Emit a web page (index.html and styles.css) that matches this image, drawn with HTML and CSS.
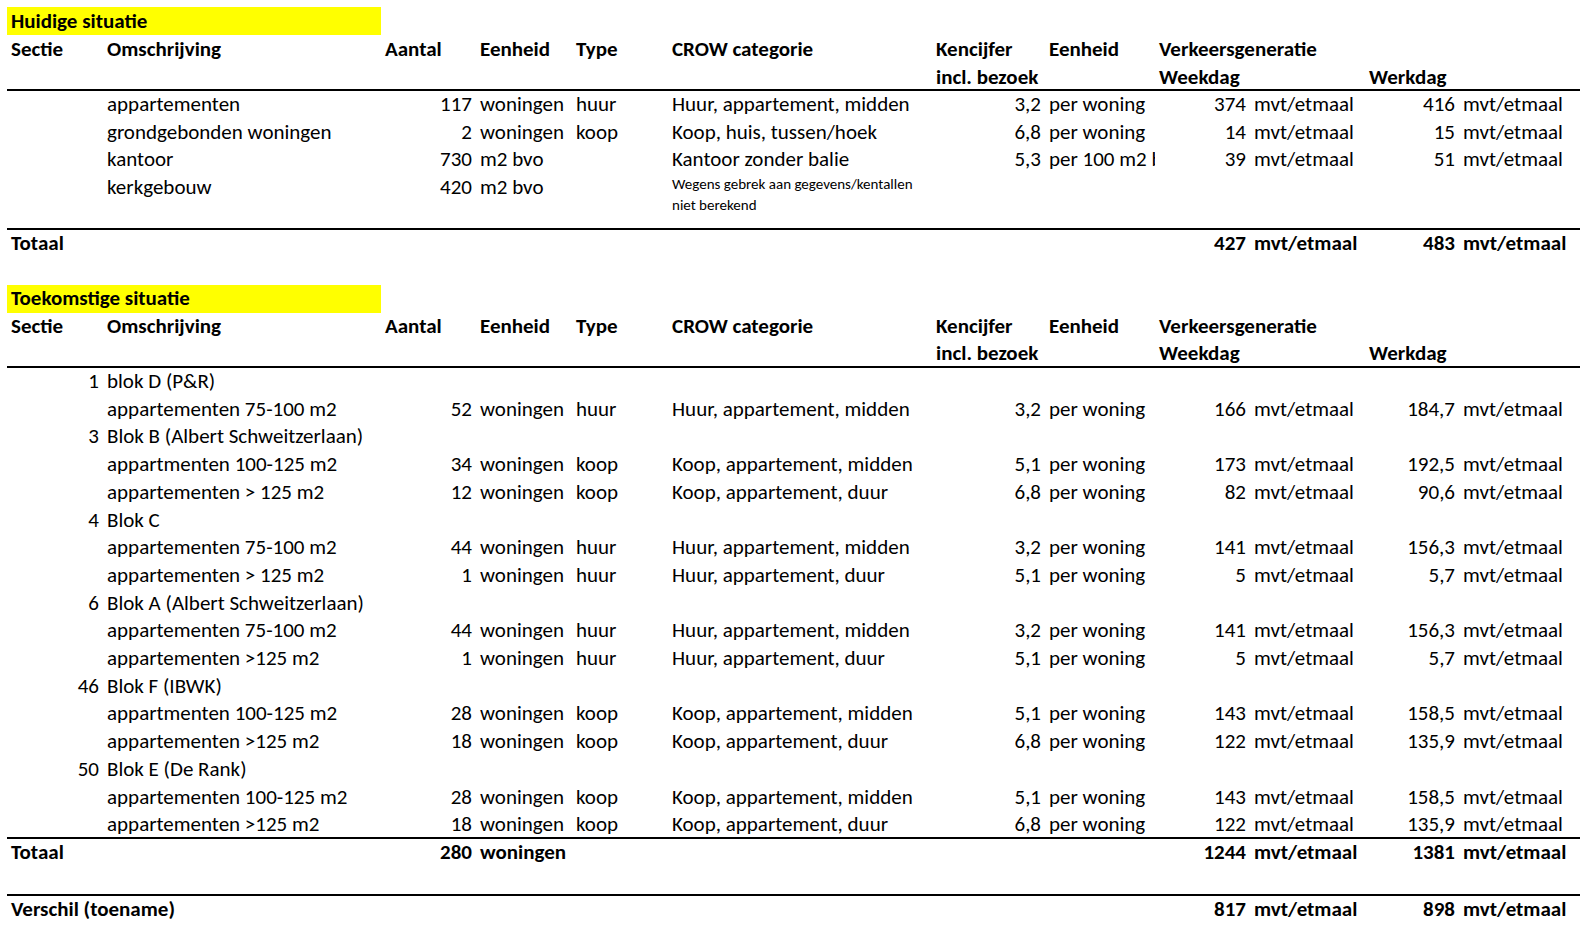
FILE: index.html
```html
<!DOCTYPE html>
<html lang="nl">
<head>
<meta charset="utf-8">
<title>Verkeersgeneratie</title>
<link rel="stylesheet" href="styles.css">
</head>
<body>
<table class="sheet first">
  <colgroup>
    <col class="c-sectie"><col class="c-omschr"><col class="c-aantal"><col class="c-eenheid"><col class="c-type"><col class="c-crow"><col class="c-ken"><col class="c-eenh2"><col class="c-wnum"><col class="c-wunit"><col class="c-knum"><col class="c-kunit">
  </colgroup>
  <tr class="head"><td colspan="2" class="hl b">Huidige situatie</td><td colspan="10"></td></tr>
  <tr class="head b"><td>Sectie</td><td>Omschrijving</td><td>Aantal</td><td>Eenheid</td><td>Type</td><td>CROW categorie</td><td>Kencijfer</td><td>Eenheid</td><td>Verkeersgeneratie</td><td></td><td></td><td></td></tr>
  <tr class="head b rule"><td></td><td></td><td></td><td></td><td></td><td></td><td>incl. bezoek</td><td></td><td>Weekdag</td><td></td><td>Werkdag</td><td></td></tr>
  <tr><td></td><td>appartementen</td><td class="num">117</td><td>woningen</td><td>huur</td><td>Huur, appartement, midden</td><td class="num">3,2</td><td>per woning</td><td class="num">374</td><td>mvt/etmaal</td><td class="num">416</td><td>mvt/etmaal</td></tr>
  <tr><td></td><td>grondgebonden woningen</td><td class="num">2</td><td>woningen</td><td>koop</td><td>Koop, huis, tussen/hoek</td><td class="num">6,8</td><td>per woning</td><td class="num">14</td><td>mvt/etmaal</td><td class="num">15</td><td>mvt/etmaal</td></tr>
  <tr><td></td><td>kantoor</td><td class="num">730</td><td>m2 bvo</td><td></td><td>Kantoor zonder balie</td><td class="num">5,3</td><td class="clip">per 100 m2 bvo</td><td class="num">39</td><td>mvt/etmaal</td><td class="num">51</td><td>mvt/etmaal</td></tr>
  <tr class="tall rule"><td></td><td>kerkgebouw</td><td class="num">420</td><td>m2 bvo</td><td></td><td class="small">Wegens gebrek aan gegevens/kentallen<br>niet berekend</td><td></td><td></td><td></td><td></td><td></td><td></td></tr>
  <tr class="b"><td colspan="2">Totaal</td><td></td><td></td><td></td><td></td><td></td><td></td><td class="num">427</td><td>mvt/etmaal</td><td class="num">483</td><td>mvt/etmaal</td></tr>
  <tr><td colspan="12"></td></tr>
</table>

<table class="sheet second">
  <colgroup>
    <col class="c-sectie"><col class="c-omschr"><col class="c-aantal"><col class="c-eenheid"><col class="c-type"><col class="c-crow"><col class="c-ken"><col class="c-eenh2"><col class="c-wnum"><col class="c-wunit"><col class="c-knum"><col class="c-kunit">
  </colgroup>
  <tr><td colspan="2" class="hl b">Toekomstige situatie</td><td colspan="10"></td></tr>
  <tr class="b"><td>Sectie</td><td>Omschrijving</td><td>Aantal</td><td>Eenheid</td><td>Type</td><td>CROW categorie</td><td>Kencijfer</td><td>Eenheid</td><td>Verkeersgeneratie</td><td></td><td></td><td></td></tr>
  <tr class="b rule"><td></td><td></td><td></td><td></td><td></td><td></td><td>incl. bezoek</td><td></td><td>Weekdag</td><td></td><td>Werkdag</td><td></td></tr>

  <tr><td class="num">1</td><td>blok D (P&amp;R)</td><td colspan="10"></td></tr>
  <tr><td></td><td>appartementen 75-100 m2</td><td class="num">52</td><td>woningen</td><td>huur</td><td>Huur, appartement, midden</td><td class="num">3,2</td><td>per woning</td><td class="num">166</td><td>mvt/etmaal</td><td class="num">184,7</td><td>mvt/etmaal</td></tr>
  <tr><td class="num">3</td><td>Blok B (Albert Schweitzerlaan)</td><td colspan="10"></td></tr>
  <tr><td></td><td>appartmenten 100-125 m2</td><td class="num">34</td><td>woningen</td><td>koop</td><td>Koop, appartement, midden</td><td class="num">5,1</td><td>per woning</td><td class="num">173</td><td>mvt/etmaal</td><td class="num">192,5</td><td>mvt/etmaal</td></tr>
  <tr><td></td><td>appartementen &gt; 125 m2</td><td class="num">12</td><td>woningen</td><td>koop</td><td>Koop, appartement, duur</td><td class="num">6,8</td><td>per woning</td><td class="num">82</td><td>mvt/etmaal</td><td class="num">90,6</td><td>mvt/etmaal</td></tr>
  <tr><td class="num">4</td><td>Blok C</td><td colspan="10"></td></tr>
  <tr><td></td><td>appartementen 75-100 m2</td><td class="num">44</td><td>woningen</td><td>huur</td><td>Huur, appartement, midden</td><td class="num">3,2</td><td>per woning</td><td class="num">141</td><td>mvt/etmaal</td><td class="num">156,3</td><td>mvt/etmaal</td></tr>
  <tr><td></td><td>appartementen &gt; 125 m2</td><td class="num">1</td><td>woningen</td><td>huur</td><td>Huur, appartement, duur</td><td class="num">5,1</td><td>per woning</td><td class="num">5</td><td>mvt/etmaal</td><td class="num">5,7</td><td>mvt/etmaal</td></tr>
  <tr><td class="num">6</td><td>Blok A (Albert Schweitzerlaan)</td><td colspan="10"></td></tr>
  <tr><td></td><td>appartementen 75-100 m2</td><td class="num">44</td><td>woningen</td><td>huur</td><td>Huur, appartement, midden</td><td class="num">3,2</td><td>per woning</td><td class="num">141</td><td>mvt/etmaal</td><td class="num">156,3</td><td>mvt/etmaal</td></tr>
  <tr><td></td><td>appartementen &gt;125 m2</td><td class="num">1</td><td>woningen</td><td>huur</td><td>Huur, appartement, duur</td><td class="num">5,1</td><td>per woning</td><td class="num">5</td><td>mvt/etmaal</td><td class="num">5,7</td><td>mvt/etmaal</td></tr>
  <tr><td class="num">46</td><td>Blok F (IBWK)</td><td colspan="10"></td></tr>
  <tr><td></td><td>appartmenten 100-125 m2</td><td class="num">28</td><td>woningen</td><td>koop</td><td>Koop, appartement, midden</td><td class="num">5,1</td><td>per woning</td><td class="num">143</td><td>mvt/etmaal</td><td class="num">158,5</td><td>mvt/etmaal</td></tr>
  <tr><td></td><td>appartementen &gt;125 m2</td><td class="num">18</td><td>woningen</td><td>koop</td><td>Koop, appartement, duur</td><td class="num">6,8</td><td>per woning</td><td class="num">122</td><td>mvt/etmaal</td><td class="num">135,9</td><td>mvt/etmaal</td></tr>
  <tr><td class="num">50</td><td>Blok E (De Rank)</td><td colspan="10"></td></tr>
  <tr><td></td><td>appartementen 100-125 m2</td><td class="num">28</td><td>woningen</td><td>koop</td><td>Koop, appartement, midden</td><td class="num">5,1</td><td>per woning</td><td class="num">143</td><td>mvt/etmaal</td><td class="num">158,5</td><td>mvt/etmaal</td></tr>
  <tr class="rule"><td></td><td>appartementen &gt;125 m2</td><td class="num">18</td><td>woningen</td><td>koop</td><td>Koop, appartement, duur</td><td class="num">6,8</td><td>per woning</td><td class="num">122</td><td>mvt/etmaal</td><td class="num">135,9</td><td>mvt/etmaal</td></tr>

  <tr class="b"><td colspan="2">Totaal</td><td class="num">280</td><td>woningen</td><td></td><td></td><td></td><td></td><td class="num">1244</td><td>mvt/etmaal</td><td class="num">1381</td><td>mvt/etmaal</td></tr>
  <tr class="rule spacer"><td colspan="12"></td></tr>
  <tr class="b"><td colspan="2">Verschil (toename)</td><td></td><td></td><td></td><td></td><td></td><td></td><td class="num">817</td><td>mvt/etmaal</td><td class="num">898</td><td>mvt/etmaal</td></tr>
</table>
</body>
</html>
```

FILE: styles.css
```css
html, body {
  margin: 0;
  background: #ffffff;
}

body {
  padding: 7px 0 0 7px;
  font-family: Carlito, Calibri, Lato, "Liberation Sans", sans-serif;
  font-size: 21px;
  color: #000000;
}

.sheet {
  table-layout: fixed;
  border-collapse: collapse;
  border-spacing: 0;
  width: 1573px;
}

.c-sectie { width: 96px; }
.c-omschr { width: 278px; }
.c-aantal { width: 95px; }
.c-eenheid { width: 96px; }
.c-type { width: 96px; }
.c-crow { width: 264px; }
.c-ken { width: 113px; }
.c-eenh2 { width: 110px; }
.c-wnum { width: 95px; }
.c-wunit { width: 115px; }
.c-knum { width: 94px; }
.c-kunit { width: 121px; }

.sheet td {
  padding: 0 4px;
  height: 27.7px;
  line-height: 27.7px;
  white-space: nowrap;
  vertical-align: middle;
  overflow: visible;
  border: 0;
}

.sheet tr.head td {
  height: 28px;
  line-height: 28px;
}

.sheet tr.spacer td {
  height: 29.7px;
}

.sheet .num {
  text-align: right;
}

.sheet .b,
.sheet .b td {
  font-weight: bold;
}

.sheet .hl {
  background: #ffff00;
}

.sheet tr.rule td {
  box-shadow: inset 0 -2px 0 #000000;
}

.sheet tr.tall td {
  height: 55.4px;
  vertical-align: top;
}

.sheet td.small {
  font-size: 15px;
  line-height: 20.5px;
  padding-top: 0;
}

.sheet td.clip {
  overflow: hidden;
  text-overflow: clip;
}
```
